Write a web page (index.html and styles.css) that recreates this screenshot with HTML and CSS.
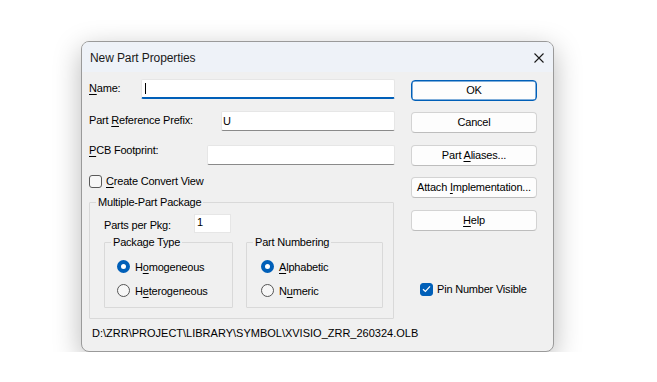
FILE: index.html
```html
<!DOCTYPE html>
<html lang="en">
<head>
  <meta charset="UTF-8">
  <title>New Part Properties</title>
  <link rel="stylesheet" href="styles.css">
</head>
<body>
  <div class="dialog">
    <div class="titlebar">
      <span class="title">New Part Properties</span>
      <svg class="close" width="10" height="10" viewBox="0 0 10 10">
        <path d="M0.5 0.5 L9.5 9.5 M9.5 0.5 L0.5 9.5" stroke="#1a1a1a" stroke-width="1.1" fill="none"/>
      </svg>
    </div>

    <div class="content">
      <div class="left">
        <div class="row row-name">
          <span class="lbl"><u>N</u>ame:</span>
          <div class="edit edit-name focused"><span class="caret"></span></div>
        </div>
        <div class="row row-prefix">
          <span class="lbl">Part <u>R</u>eference Prefix:</span>
          <div class="edit edit-prefix">U</div>
        </div>
        <div class="row row-pcb">
          <span class="lbl lbl-up"><u>P</u>CB Footprint:</span>
          <div class="edit edit-pcb"></div>
        </div>

        <label class="check check-convert">
          <span class="box"></span>
          <span><u>C</u>reate Convert View</span>
        </label>

        <fieldset class="group group-multi">
          <legend>Multiple-Part Package</legend>
          <div class="row row-parts">
            <span class="lbl">Parts per Pkg:</span>
            <div class="edit edit-parts">1</div>
          </div>
          <div class="subgroups">
            <fieldset class="group group-type">
              <legend>Package Type</legend>
              <div class="radio on"><span class="dot"></span><span>H<u>o</u>mogeneous</span></div>
              <div class="radio"><span class="dot"></span><span>H<u>e</u>terogeneous</span></div>
            </fieldset>
            <fieldset class="group group-num">
              <legend>Part Numbering</legend>
              <div class="radio on"><span class="dot"></span><span><u>A</u>lphabetic</span></div>
              <div class="radio"><span class="dot"></span><span>N<u>u</u>meric</span></div>
            </fieldset>
          </div>
        </fieldset>

        <div class="path">D:\ZRR\PROJECT\LIBRARY\SYMBOL\XVISIO_ZRR_260324.OLB</div>
      </div>

      <div class="right">
        <div class="btn btn-default">OK</div>
        <div class="btn">Cancel</div>
        <div class="btn">Part <u>A</u>liases...</div>
        <div class="btn">Attach <u>I</u>mplementation...</div>
        <div class="btn"><u>H</u>elp</div>

        <label class="check check-pin">
          <span class="box checked">
            <svg width="9" height="8" viewBox="0 0 9 8"><path d="M1 4.2 L3.4 6.5 L8 1.4" stroke="#fff" stroke-width="1.2" fill="none"/></svg>
          </span>
          <span>Pin Number Visible</span>
        </label>
      </div>
    </div>
  </div>
</body>
</html>
```

FILE: styles.css
```css
body {
  margin: 0;
  background: #fff;
  font-family: "Liberation Sans", Arial, sans-serif;
  font-size: 11px;
  color: #000;
}
u {
  text-decoration-thickness: 1px;
  text-underline-offset: 2px;
}

.dialog {
  margin: 41px 0 0 81px;
  width: 473px;
  height: 311px;
  box-sizing: border-box;
  border: 1px solid #9a9a9a;
  border-radius: 8px;
  background: #f0f0f0;
  overflow: hidden;
  box-shadow: 0 8px 28px rgba(0, 0, 0, 0.28);
}

.titlebar {
  height: 30px;
  display: flex;
  align-items: center;
  justify-content: space-between;
  padding: 0 9px 0 8px;
  background: #eef2f8;
}
.title {
  font-size: 12px;
  color: #1a1a1a;
  letter-spacing: -0.1px;
  margin-top: 1px;
}
.close {
  display: block;
  margin-top: 1px;
}

.content {
  display: flex;
  padding: 7px 0 0 7px;
  letter-spacing: -0.2px;
}
.left {
  width: 306px;
}
.right {
  width: 126px;
  margin-left: 16px;
  padding-top: 1px;
}

/* edit rows */
.row {
  display: flex;
  align-items: flex-start;
  height: 20px;
}
.row-prefix { margin-top: 12px; }
.row-pcb { margin-top: 14px; }
.lbl {
  line-height: 14px;
  padding-top: 2px;
}
.lbl-up {
  padding-top: 0;
  margin-top: -2px;
}
.edit {
  box-sizing: border-box;
  height: 20px;
  background: #fff;
  border: 1px solid #e6e6e6;
  border-bottom-color: #8a8a8a;
  border-radius: 2px;
  line-height: 18px;
  padding-left: 1px;
  margin-left: auto;
}
.edit-name { width: 254px; }
.edit-prefix { width: 174px; }
.edit-pcb { width: 188px; }
.edit.focused {
  border-bottom: 2px solid #005fb8;
  padding-left: 3px;
}
.caret {
  display: inline-block;
  width: 1px;
  height: 11px;
  background: #000;
  vertical-align: -1px;
}

/* checkboxes */
.check {
  display: flex;
  align-items: center;
  height: 14px;
}
.check-convert {
  margin-top: 9px;
}
.box {
  box-sizing: border-box;
  width: 13px;
  height: 13px;
  border: 1px solid #5a5a5a;
  border-radius: 3px;
  background: #f7f7f7;
  margin-right: 4px;
  display: flex;
  align-items: center;
  justify-content: center;
}
.box.checked {
  background: #005fb8;
  border-color: #005fb8;
}
.check-pin {
  margin: 51px 0 0 9px;
}

/* group boxes */
.group {
  margin: 0;
  border: 1px solid #d9d9d9;
  border-radius: 1px;
  box-sizing: border-box;
}
.group legend {
  line-height: 14px;
  padding: 0 2px;
}
.group-multi {
  width: 305px;
  margin-top: 7px;
  padding: 5px 10px 10px 14px;
}
.group-multi > legend {
  margin-left: -8px;
}
.row-parts {
  height: 19px;
}
.row-parts .lbl {
  padding-top: 4px;
}
.edit-parts {
  width: 37px;
  height: 19px;
  margin-left: 23px;
  padding-left: 2px;
  line-height: 15px;
  border-radius: 0;
  border-color: #e6e6e6;
}
.subgroups {
  display: flex;
  gap: 13px;
  margin-top: 2px;
}
.group-type {
  width: 129px;
  padding: 11px 6px 10px 12px;
}
.group-type legend { margin-left: -6px; }
.group-num {
  width: 137px;
  padding: 11px 6px 10px 14px;
}
.group-num legend { margin-left: -8px; }

.radio {
  display: flex;
  align-items: center;
  height: 13px;
}
.radio + .radio {
  margin-top: 11px;
}
.dot {
  box-sizing: border-box;
  width: 13px;
  height: 13px;
  border-radius: 50%;
  border: 1px solid #555;
  background: #f7f7f7;
  margin-right: 5px;
  flex: none;
}
.radio.on .dot {
  border: 4px solid #005fb8;
  background: #fff;
}

.path {
  margin: 7px 0 0 3px;
  line-height: 14px;
  letter-spacing: 0;
}

/* buttons */
.btn {
  box-sizing: border-box;
  height: 21px;
  line-height: 19px;
  text-align: center;
  background: #fdfdfd;
  border: 1px solid #d3d3d3;
  border-bottom-color: #bdbdbd;
  border-radius: 4px;
}
.btn + .btn { margin-top: 11px; }
.btn:nth-child(3), .btn:nth-child(5) { margin-top: 12px; }
.btn-default {
  border: 1px solid #005fb8;
  box-shadow: inset 0 0 0 0.5px #005fb8;
  line-height: 19px;
}
```
